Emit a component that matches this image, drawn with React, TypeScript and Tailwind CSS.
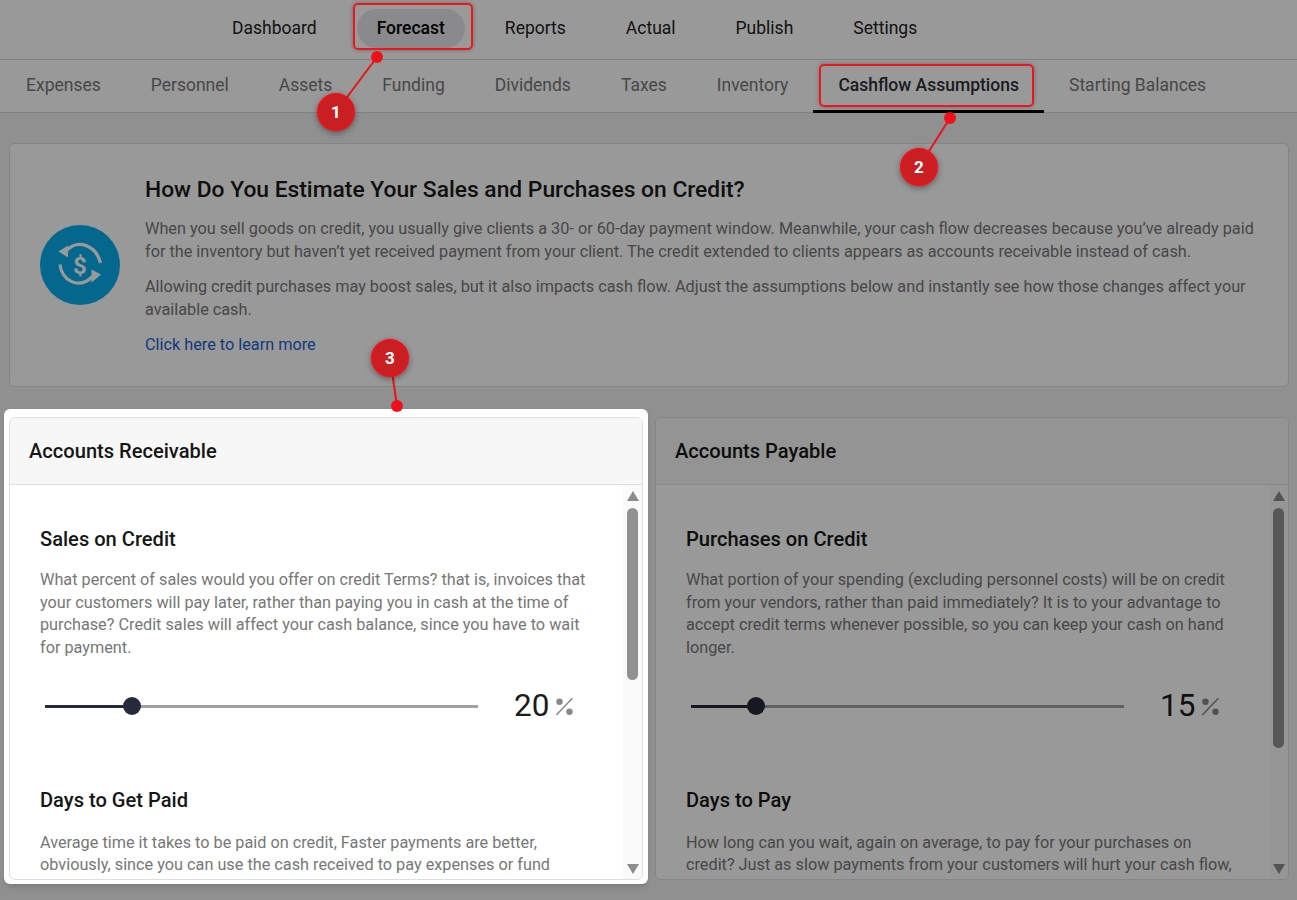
const mainNav = ["Dashboard", "Forecast", "Reports", "Actual", "Publish", "Settings"];
const subNav = ["Expenses", "Personnel", "Assets", "Funding", "Dividends", "Taxes", "Inventory", "Cashflow Assumptions", "Starting Balances"];

const CashCycleIcon = () => (
  <svg width="80" height="80" viewBox="0 0 80 80" className="shrink-0 self-center">
    <circle cx="40" cy="40" r="40" fill="#08aded" />
    <g fill="none" stroke="#fff" strokeWidth="3.2">
      <path d="M27 25C38 14 56 20 60.5 38" />
      <path d="M20 39.5C21 54 38 66 52.5 51.5" />
    </g>
    <path d="M18.5 26.5L28 20.5V32.5Z" fill="#fff" />
    <path d="M61 49.5L51.5 44.5V57.5Z" fill="#fff" />
    <text x="40" y="48.5" textAnchor="middle" fontSize="24" fontWeight="700" fill="#fff" fontFamily="Roboto, sans-serif">$</text>
  </svg>
);

const PercentIcon = () => (
  <svg width="17" height="18" viewBox="0 0 17 18" className="shrink-0">
    <circle cx="3.5" cy="3.7" r="3.2" fill="#888" />
    <circle cx="13.5" cy="13.7" r="3.2" fill="#888" />
    <path d="M0.3 17L16.3 0.3" stroke="#888" strokeWidth="1.5" />
  </svg>
);

const Slider = ({ value, percent }: { value: number; percent: number }) => (
  <div className="flex h-[36px] items-center pl-[5px]">
    <div className="relative h-[3px] w-[433px] shrink-0 bg-[#a0a0a0]">
      <div className="h-full bg-[#262a3a]" style={{ width: `${percent}%` }} />
      <div className="absolute top-[-8px] h-[18px] w-[18px] -translate-x-1/2 rounded-full bg-[#262a3a]" style={{ left: `${percent}%` }} />
    </div>
    <span className="ml-[36px] -mt-[2px] text-[31.5px] leading-none text-[#1c1c1c]">{value}</span>
    <span className="ml-[7px] flex"><PercentIcon /></span>
  </div>
);

const Scrollbar = ({ thumb }: { thumb: string }) => (
  <div className="flex w-[19px] shrink-0 flex-col items-center bg-[#fafafa] pt-[6px] pb-[5px]">
    <div className="h-0 w-0 border-x-[6px] border-b-[10px] border-x-transparent border-b-[#8c8c8c]" />
    <div className="flex-1 pt-[7px]">
      <div className={`w-[11px] rounded-full bg-[#919191] ${thumb}`} />
    </div>
    <div className="h-0 w-0 border-x-[6px] border-t-[10px] border-x-transparent border-t-[#8c8c8c]" />
  </div>
);

type Section = { title: string; text: string; value?: number; percent?: number };

const Panel = ({ title, sections, thumb, raised }: { title: string; sections: Section[]; thumb: string; raised?: boolean }) => (
  <div className={`flex h-[463px] flex-col ${raised ? "relative z-20" : ""}`}>
    {raised && <div className="absolute -top-[8px] -right-[5px] -bottom-[4px] -left-[5px] -z-10 rounded-md bg-white shadow-md" />}
    <div className="flex h-full flex-col overflow-hidden rounded-md border border-[#dfdfdf] bg-white">
      <div className="flex h-[67px] shrink-0 items-center border-b border-[#dfdfdf] bg-[#f7f7f7] px-[19px]">
        <h2 className="text-[20.1px] font-medium text-[#161616]">{title}</h2>
      </div>
      <div className="flex min-h-0 flex-1">
        <div className="min-w-0 flex-1 overflow-hidden pt-[42px] pr-[31px] pl-[30px]">
          {sections.map((s, i) => (
            <div key={s.title} className={i === 0 ? "mb-[63px]" : ""}>
              <h3 className="text-[20.1px] leading-[24px] font-medium text-[#161616]">{s.title}</h3>
              <p className={`text-[16.25px] leading-[22.67px] text-[#777] ${i === 0 ? "mt-[18px]" : "mt-[20px]"}`}>{s.text}</p>
              {s.value !== undefined && (
                <div className="mt-[29px]">
                  <Slider value={s.value} percent={s.percent ?? 0} />
                </div>
              )}
            </div>
          ))}
        </div>
        <Scrollbar thumb={thumb} />
      </div>
    </div>
  </div>
);

const Callout = ({ n, cx, cy, dotX, dotY }: { n: number; cx: number; cy: number; dotX: number; dotY: number }) => (
  <g>
    <line x1={cx} y1={cy} x2={dotX} y2={dotY} stroke="#e8141c" strokeWidth="2" />
    <circle cx={dotX} cy={dotY} r="6" fill="#ee1119" />
    <circle cx={cx} cy={cy} r="18" fill="#c91f23" stroke="#ee1119" strokeWidth="2" style={{ filter: "drop-shadow(0 2px 3px rgba(0,0,0,.4))" }} />
    <text x={cx} y={cy + 6} textAnchor="middle" fontSize="17" fontWeight="700" fill="#fff" fontFamily="Roboto, sans-serif">{n}</text>
  </g>
);

export default function App() {
  return (
    <div className="relative h-[900px] w-[1297px] overflow-hidden bg-[#eef1ee] font-['Roboto',sans-serif]">
      <header className="flex h-[60px] items-center gap-5 border-b border-[#d6d6d6] bg-white pb-[3px] pl-[212px]">
        {mainNav.map((item) => (
          <a key={item} className={`flex h-[39px] items-center rounded-full px-5 text-[17.5px] ${item === "Forecast" ? "bg-[#e6e6ea] font-medium text-black" : "text-[#222]"}`}>
            {item}
          </a>
        ))}
      </header>
      <nav className="flex h-[53px] items-stretch border-b border-[#d6d6d6] bg-white pl-px">
        {subNav.map((item) => (
          <a key={item} className={`-mb-px flex items-center border-b-[3px] px-[25px] text-[17.5px] ${item === "Cashflow Assumptions" ? "border-black font-medium text-[#2c2f3a]" : "border-transparent text-[#777]"}`}>
            {item}
          </a>
        ))}
      </nav>
      <main className="pt-[30px] pr-[8px] pl-[9px]">
        <section className="flex h-[244px] items-start gap-[25px] rounded-md border border-[#dcdcdc] bg-white pl-[30px]">
          <CashCycleIcon />
          <div className="pt-[32.3px] pr-[30px]">
            <h1 className="text-[22.8px] leading-[28px] font-medium text-[#1a1a1a]">How Do You Estimate Your Sales and Purchases on Credit?</h1>
            <p className="mt-[14px] text-[16.25px] leading-[22.67px] text-[#777]">
              When you sell goods on credit, you usually give clients a 30- or 60-day payment window. Meanwhile, your cash flow decreases because you’ve already paid for the inventory but haven’t yet received payment from your client. The credit extended to clients appears as accounts receivable instead of cash.
            </p>
            <p className="mt-[12.5px] text-[16.25px] leading-[22.67px] text-[#777]">
              Allowing credit purchases may boost sales, but it also impacts cash flow. Adjust the assumptions below and instantly see how those changes affect your available cash.
            </p>
            <a className="mt-[12.5px] block text-[16.25px] leading-[22.67px] text-[#1d5fd0]">Click here to learn more</a>
          </div>
        </section>
        <div className="mt-[30px] grid grid-cols-2 gap-3">
          <Panel
            raised
            title="Accounts Receivable"
            thumb="h-[172px]"
            sections={[
              { title: "Sales on Credit", text: "What percent of sales would you offer on credit Terms? that is, invoices that your customers will pay later, rather than paying you in cash at the time of purchase? Credit sales will affect your cash balance, since you have to wait for payment.", value: 20, percent: 20 },
              { title: "Days to Get Paid", text: "Average time it takes to be paid on credit, Faster payments are better, obviously, since you can use the cash received to pay expenses or fund" },
            ]}
          />
          <Panel
            title="Accounts Payable"
            thumb="h-[240px]"
            sections={[
              { title: "Purchases on Credit", text: "What portion of your spending (excluding personnel costs) will be on credit from your vendors, rather than paid immediately? It is to your advantage to accept credit terms whenever possible, so you can keep your cash on hand longer.", value: 15, percent: 15 },
              { title: "Days to Pay", text: "How long can you wait, again on average, to pay for your purchases on credit? Just as slow payments from your customers will hurt your cash flow," },
            ]}
          />
        </div>
      </main>

      <div className="absolute inset-0 z-10 bg-black/40" />

      <div className="absolute top-[3px] left-[353px] z-30 h-[47px] w-[120px] rounded-[5px] border-2 border-[#f0141c] shadow-[0_0_4px_rgba(0,0,0,.3)]" />
      <div className="absolute top-[64px] left-[819px] z-30 h-[43px] w-[215px] rounded-[5px] border-2 border-[#f0141c] shadow-[0_0_4px_rgba(0,0,0,.3)]" />
      <svg className="absolute inset-0 z-30" width="1297" height="900">
        <Callout n={1} cx={336} cy={112} dotX={377} dotY={57} />
        <Callout n={2} cx={919} cy={167} dotX={950} dotY={118} />
        <Callout n={3} cx={390} cy={358} dotX={397} dotY={406} />
      </svg>
    </div>
  );
}
